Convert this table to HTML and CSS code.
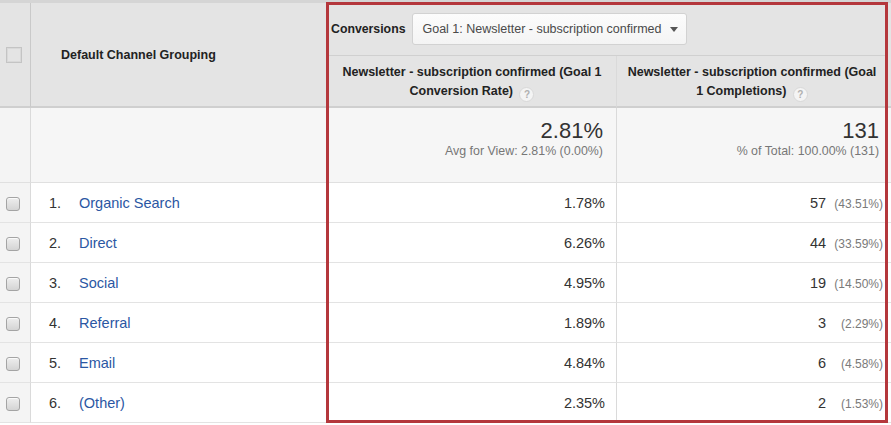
FILE: index.html
```html
<!DOCTYPE html>
<html lang="en">
<head>
<meta charset="utf-8">
<title>Default Channel Grouping – Conversions</title>
<link rel="stylesheet" href="styles.css">
</head>
<body>
<div class="report">
  <table class="grid">
    <colgroup>
      <col class="c-check"><col class="c-chan"><col class="c-rate"><col class="c-comp"><col class="c-next">
    </colgroup>
    <thead>
      <tr>
        <th rowspan="2" class="head-check"><span class="cb-empty"></span></th>
        <th rowspan="2" class="head-chan">Default Channel Grouping</th>
        <th colspan="2" class="head-seg">
          <div class="seg">
            <span class="seg-label">Conversions</span>
            <span class="select">Goal 1: Newsletter - subscription confirmed<span class="caret"></span></span>
          </div>
        </th>
        <th rowspan="2" class="head-next"></th>
      </tr>
      <tr>
        <th class="head-metric">Newsletter - subscription confirmed (Goal 1<br>Conversion Rate) <span class="help">?</span></th>
        <th class="head-metric">Newsletter - subscription confirmed (Goal<br>1 Completions) <span class="help">?</span></th>
      </tr>
    </thead>
    <tbody>
      <tr class="totals">
        <td class="cell-check"></td>
        <td class="cell-chan"></td>
        <td class="tot tot-rate"><div class="tot-big">2.81%</div><div class="tot-sub">Avg for View: 2.81% (0.00%)</div></td>
        <td class="tot tot-comp"><div class="tot-big">131</div><div class="tot-sub">% of Total: 100.00% (131)</div></td>
        <td class="cell-next"></td>
      </tr>
      <tr class="row">
        <td class="cell-check"><span class="cb"></span></td>
        <td class="cell-chan"><span class="idx">1.</span><a class="link">Organic Search</a></td>
        <td class="num">1.78%</td>
        <td class="comp">57<span class="pct">(43.51%)</span></td>
        <td class="cell-next"></td>
      </tr>
      <tr class="row">
        <td class="cell-check"><span class="cb"></span></td>
        <td class="cell-chan"><span class="idx">2.</span><a class="link">Direct</a></td>
        <td class="num">6.26%</td>
        <td class="comp">44<span class="pct">(33.59%)</span></td>
        <td class="cell-next"></td>
      </tr>
      <tr class="row">
        <td class="cell-check"><span class="cb"></span></td>
        <td class="cell-chan"><span class="idx">3.</span><a class="link">Social</a></td>
        <td class="num">4.95%</td>
        <td class="comp">19<span class="pct">(14.50%)</span></td>
        <td class="cell-next"></td>
      </tr>
      <tr class="row">
        <td class="cell-check"><span class="cb"></span></td>
        <td class="cell-chan"><span class="idx">4.</span><a class="link">Referral</a></td>
        <td class="num">1.89%</td>
        <td class="comp">3<span class="pct">(2.29%)</span></td>
        <td class="cell-next"></td>
      </tr>
      <tr class="row">
        <td class="cell-check"><span class="cb"></span></td>
        <td class="cell-chan"><span class="idx">5.</span><a class="link">Email</a></td>
        <td class="num">4.84%</td>
        <td class="comp">6<span class="pct">(4.58%)</span></td>
        <td class="cell-next"></td>
      </tr>
      <tr class="row">
        <td class="cell-check"><span class="cb"></span></td>
        <td class="cell-chan"><span class="idx">6.</span><a class="link">(Other)</a></td>
        <td class="num">2.35%</td>
        <td class="comp">2<span class="pct">(1.53%)</span></td>
        <td class="cell-next"></td>
      </tr>
    </tbody>
  </table>
  <div class="highlight"></div>
</div>
</body>
</html>
```

FILE: styles.css
```css
* { box-sizing: border-box; }

body {
  margin: 0;
  background: #ffffff;
  overflow: hidden;
  font-family: "Liberation Sans", Arial, sans-serif;
  color: #333333;
}

.report {
  position: relative;
  width: 891px;
  height: 425px;
  overflow: hidden;
}

.grid {
  border-collapse: separate;
  border-spacing: 0;
  table-layout: fixed;
  width: 1008px;
  border-top: 3px solid #d5d5d5;
}

.c-check { width: 31px; }
.c-chan { width: 297px; }
.c-rate { width: 289px; }
.c-comp { width: 271px; }
.c-next { width: 120px; }

th, td {
  padding: 0;
  border-right: 1px solid #dadada;
  border-bottom: 1px solid #e3e3e3;
}

thead th {
  background: #e4e4e4;
  color: #222222;
  font-weight: bold;
  font-size: 12.5px;
}

.head-check,
.head-chan,
.head-next {
  border-bottom: 2px solid #cfcfcf;
  border-right-color: #c9c9c9;
  vertical-align: middle;
}

.head-check { text-align: left; padding-left: 6px; }

.cb-empty {
  display: inline-block;
  width: 16px;
  height: 16px;
  border: 1px solid #c4c4c4;
  box-shadow: inset 0 0 0 1px #d9d9d9;
  vertical-align: middle;
}

.head-chan {
  text-align: left;
  padding-left: 30px;
}

.head-seg {
  height: 53px;
  border-bottom: 1px solid #d0d0d0;
  text-align: left;
  vertical-align: middle;
}

.seg {
  display: flex;
  align-items: center;
  gap: 7px;
  padding-left: 3px;
}

.seg-label { font-size: 12.3px; }

.select {
  display: flex;
  align-items: center;
  justify-content: space-between;
  width: 275px;
  height: 32px;
  padding: 0 8px 0 9px;
  background: linear-gradient(#fcfcfc, #f4f4f4);
  border: 1px solid #d2d2d2;
  border-radius: 3px;
  font-weight: normal;
  font-size: 12.5px;
  color: #4a4a4a;
}

.caret {
  width: 0;
  height: 0;
  border-left: 4px solid transparent;
  border-right: 4px solid transparent;
  border-top: 5px solid #555555;
}

.head-metric {
  height: 52px;
  border-bottom: 2px solid #cfcfcf;
  text-align: center;
  line-height: 19px;
  padding: 2px 6px 0;
  vertical-align: middle;
}

.help {
  display: inline-block;
  width: 15px;
  height: 15px;
  margin-left: 3px;
  border-radius: 50%;
  background: #f4f4f4;
  border: 1px solid #d8d8d8;
  color: #b0b0b0;
  font-size: 10px;
  line-height: 13px;
  text-align: center;
  vertical-align: -3px;
}

.totals td {
  height: 75px;
  background: #f6f6f6;
  vertical-align: top;
  border-bottom-color: #e0e0e0;
}

.tot { text-align: right; padding-top: 10px; }
.tot-rate { padding-right: 13px; }
.tot-comp { padding-right: 8px; }

.tot-big {
  font-size: 22px;
  line-height: 25px;
  color: #333333;
}

.tot-sub {
  font-size: 12.4px;
  line-height: 16px;
  color: #777777;
}

.row td {
  height: 40px;
  font-size: 14.5px;
  vertical-align: middle;
}

td.cell-check {
  background: #f4f4f4;
  padding-left: 6px;
}

.cb {
  display: inline-block;
  width: 14px;
  height: 14px;
  border: 1px solid #a4a4a4;
  border-radius: 3px;
  background: linear-gradient(#eeeeee, #d4d4d4);
  box-shadow: inset 0 1px 0 #fafafa;
  vertical-align: middle;
}

.row td.cell-chan { padding-left: 18px; }

.idx {
  display: inline-block;
  width: 30px;
  color: #333333;
}

.link {
  color: #2b57a3;
  text-decoration: none;
}

.num {
  text-align: right;
  padding-right: 11px;
  color: #333333;
}

.comp {
  text-align: right;
  padding-right: 4px;
  color: #333333;
}

.pct {
  display: inline-block;
  min-width: 57px;
  text-align: right;
  font-size: 12px;
  color: #7a7a7a;
}

.highlight {
  position: absolute;
  left: 326px;
  top: 2px;
  width: 562px;
  height: 421px;
  border: 3px solid #b4373c;
  pointer-events: none;
}
```
